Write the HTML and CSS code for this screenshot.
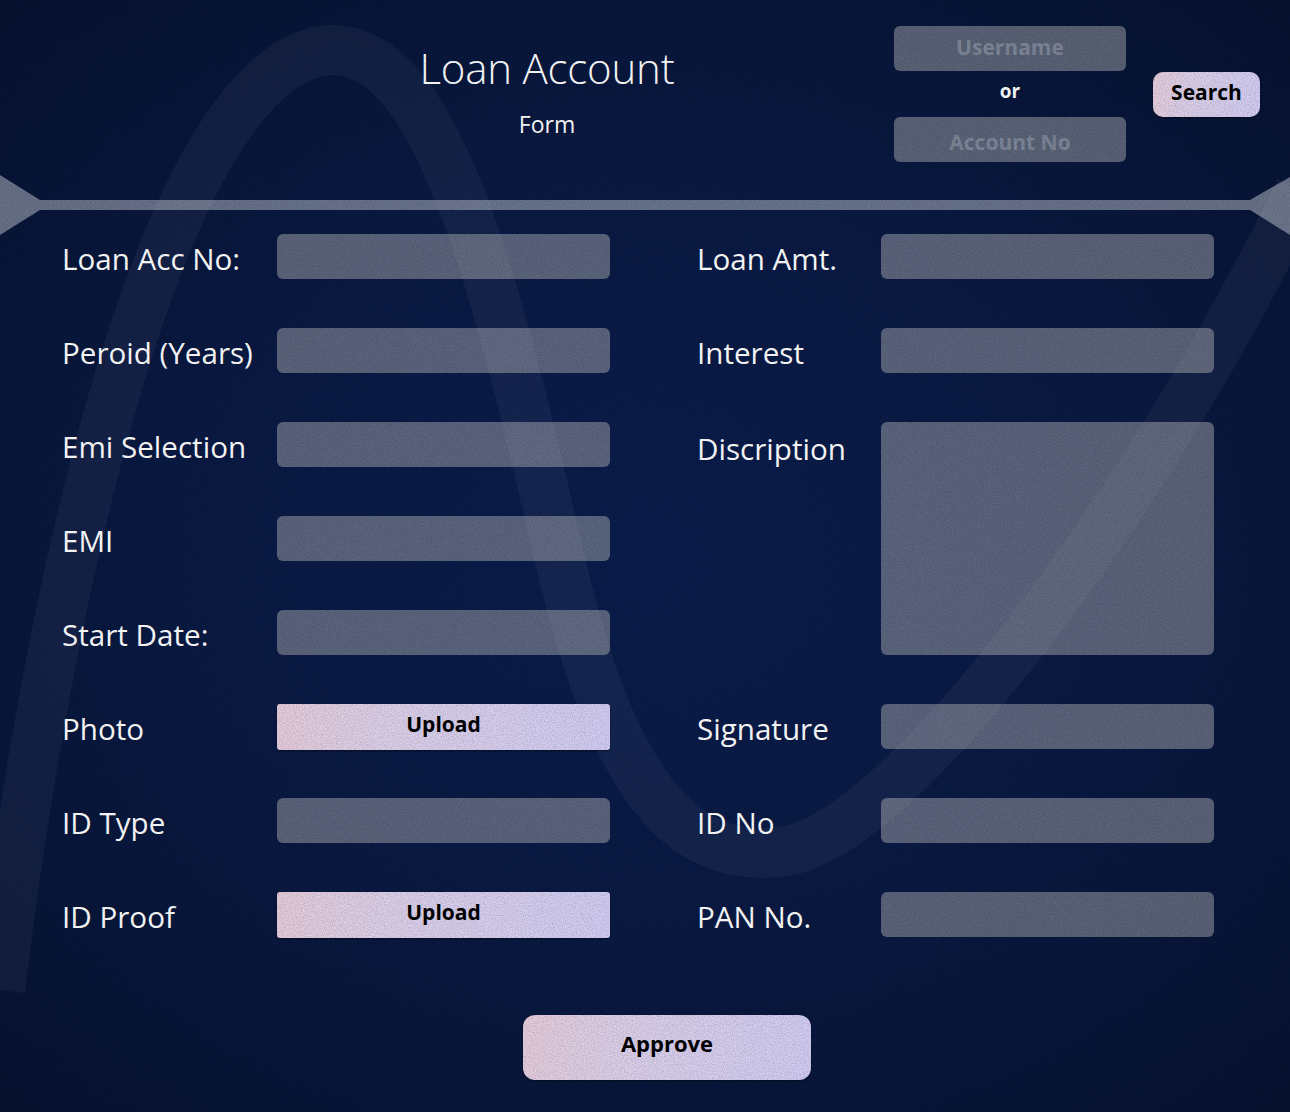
FILE: index.html
```html
<!DOCTYPE html>
<html lang="en">
<head>
<meta charset="utf-8">
<title>Loan Account Form</title>
<link rel="stylesheet" href="styles.css">
</head>
<body>
<div class="page">
  <svg class="bg-curve" width="1290" height="1112" viewBox="0 0 1290 1112" aria-hidden="true">
    <path d="M 0 990 C 60 500, 180 60, 330 50 C 440 45, 500 300, 560 560 C 620 820, 700 860, 780 852 C 900 840, 1150 500, 1300 190" />
  </svg>

  <header class="top">
    <div class="title-block">
      <h1 class="title">Loan Account</h1>
      <p class="subtitle">Form</p>
    </div>
    <div class="lookup">
      <input class="lookup-input" type="text" placeholder="Username">
      <span class="or">or</span>
      <input class="lookup-input lower" type="text" placeholder="Account No">
    </div>
    <button class="btn search-btn" type="button">Search</button>
  </header>

  <div class="divider">
    <svg width="1290" height="60" viewBox="0 0 1290 60" aria-hidden="true">
      <polygon points="0,0 40,25 1250,25 1290,2 1290,60 1250,35 40,35 0,60" />
    </svg>
  </div>

  <form class="loan-form">
    <label class="lbl">Loan Acc No:</label>
    <input class="field" type="text">
    <label class="lbl right">Loan Amt.</label>
    <input class="field" type="text">

    <label class="lbl">Peroid (Years)</label>
    <input class="field" type="text">
    <label class="lbl right">Interest</label>
    <input class="field" type="text">

    <label class="lbl">Emi Selection</label>
    <input class="field" type="text">
    <label class="lbl right top-aligned">Discription</label>
    <textarea class="field area"></textarea>

    <label class="lbl">EMI</label>
    <input class="field" type="text">
    <span class="spacer"></span>

    <label class="lbl">Start Date:</label>
    <input class="field" type="text">
    <span class="spacer"></span>

    <label class="lbl">Photo</label>
    <button class="btn upload" type="button">Upload</button>
    <label class="lbl right">Signature</label>
    <input class="field" type="text">

    <label class="lbl">ID Type</label>
    <input class="field" type="text">
    <label class="lbl right">ID No</label>
    <input class="field" type="text">

    <label class="lbl">ID Proof</label>
    <button class="btn upload" type="button">Upload</button>
    <label class="lbl right">PAN No.</label>
    <input class="field" type="text">
  </form>

  <div class="actions">
    <button class="btn approve" type="button">Approve</button>
  </div>

  <svg class="grain" width="1290" height="1112" aria-hidden="true">
    <filter id="noise">
      <feTurbulence type="fractalNoise" baseFrequency="0.9" numOctaves="2" seed="3" />
      <feColorMatrix type="matrix" values="0 0 0 0 0  0 0 0 0 0  0 0 0 0 0  0 0 0 -1.6 1.05" />
    </filter>
    <rect width="1290" height="1112" filter="url(#noise)" />
  </svg>
</div>
</body>
</html>
```

FILE: styles.css
```css
* { box-sizing: border-box; }

html, body {
  margin: 0;
  padding: 0;
}

body {
  width: 1290px;
  height: 1112px;
  overflow: hidden;
  background: #081632;
  font-family: "Open Sans", "Noto Sans", sans-serif;
  color: #ffffff;
}

.page {
  position: relative;
  width: 1290px;
  height: 1112px;
  overflow: hidden;
  background:
    radial-gradient(ellipse 75% 70% at 50% 50%, #0a1d4c 0%, #0a1a44 45%, #08163a 75%, #061230 100%);
}

.bg-curve {
  position: absolute;
  left: 0;
  top: 0;
  pointer-events: none;
}

.bg-curve path {
  fill: none;
  stroke: rgba(215, 220, 235, 0.055);
  stroke-width: 50;
}

.grain {
  position: absolute;
  left: 0;
  top: 0;
  pointer-events: none;
  opacity: 0.2;
}

/* Header */
.top {
  position: relative;
  display: flex;
  align-items: flex-start;
  padding-top: 26px;
  height: 162px;
}

.title-block {
  width: 400px;
  margin-left: 347px;
  text-align: center;
}

.title {
  margin: 14px 0 0;
  font-weight: 300;
  font-size: 42px;
  line-height: 56px;
  letter-spacing: -0.2px;
}

.subtitle {
  margin: 13px 0 0;
  font-size: 23px;
  line-height: 30px;
  font-weight: 400;
}

.lookup {
  margin-left: 147px;
  width: 232px;
  display: flex;
  flex-direction: column;
  align-items: stretch;
}

.lookup-input {
  height: 45px;
  border: none;
  outline: none;
  border-radius: 6px;
  background: rgba(200, 200, 200, 0.43);
  font-family: "Open Sans", "Noto Sans", sans-serif;
  font-weight: 700;
  font-size: 21px;
  text-align: center;
  color: #ffffff;
  padding: 0 0 4px;
}

.lookup-input.lower {
  padding: 4px 0 0;
}

.lookup-input::placeholder {
  color: rgba(132, 140, 158, 0.9);
}

.or {
  height: 46px;
  line-height: 40px;
  text-align: center;
  font-weight: 700;
  font-size: 19px;
}

.btn {
  border: none;
  cursor: pointer;
  font-family: "Open Sans", "Noto Sans", sans-serif;
  font-weight: 700;
  color: #000000;
  background: linear-gradient(100deg, #e6cddc 0%, #dcd0ea 35%, #d2cdf4 100%);
  box-shadow: 0 1px 2px rgba(0, 0, 0, 0.45);
}

.search-btn {
  position: relative;
  margin-left: 27px;
  margin-top: 46px;
  width: 107px;
  height: 45px;
  border-radius: 10px;
  font-size: 21px;
  padding: 0 0 6px;
}

/* Divider */
.divider {
  position: relative;
  margin-top: 13px;
  height: 59px;
}

.divider svg {
  display: block;
}

.divider polygon {
  fill: rgba(200, 205, 215, 0.5);
}

/* Form */
.loan-form {
  position: relative;
  display: grid;
  grid-template-columns: 215px 333px 271px 333px;
  grid-auto-rows: 45px;
  row-gap: 49px;
  padding-left: 62px;
}

.lbl {
  align-self: center;
  font-size: 29.6px;
  line-height: 45px;
  padding-top: 4px;
  white-space: nowrap;
  font-weight: 400;
}

.lbl.right {
  padding-left: 87px;
}

.lbl.top-aligned {
  align-self: start;
}

.field {
  border: none;
  outline: none;
  border-radius: 6px;
  background: rgba(200, 200, 200, 0.43);
  height: 45px;
  width: 333px;
  padding: 0 12px;
  font-family: "Open Sans", "Noto Sans", sans-serif;
  font-size: 20px;
  color: #ffffff;
}

.field.area {
  grid-row: span 3;
  height: 233px;
  resize: none;
}

.upload {
  height: 46px;
  width: 333px;
  border-radius: 3px;
  font-size: 21px;
  padding: 0 0 7px;
}

/* Actions */
.actions {
  position: relative;
  padding-left: 523px;
  margin-top: 78px;
}

.approve {
  width: 288px;
  height: 65px;
  border-radius: 12px;
  font-size: 22px;
  padding: 0 0 10px;
}
```
